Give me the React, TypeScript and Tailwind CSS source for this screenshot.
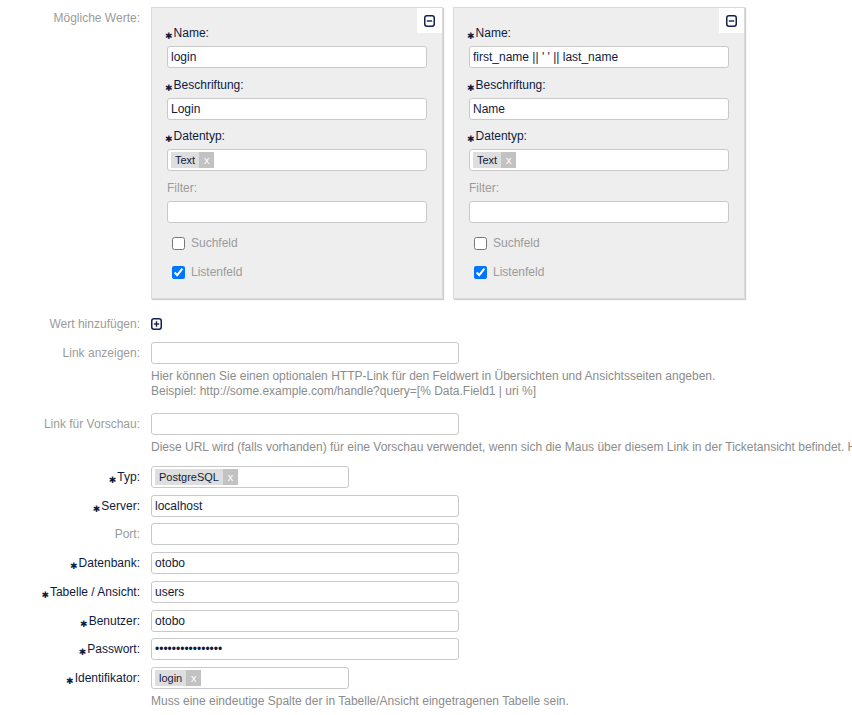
import React from "react";

const INK = "text-[#0f1b3d]";

function Star() {
  return (
    <span className="relative top-[2px] mr-[1px] inline-block align-baseline text-[9px] leading-[0] text-[#0f1b3d]" style={{ fontFamily: '"DejaVu Sans", sans-serif' }}>
      ✱
    </span>
  );
}

function BoxIcon({ plus }: { plus?: boolean }) {
  return (
    <svg width="11" height="12" viewBox="0 0 11 12" className="block">
      <rect x="0.75" y="0.75" width="9.5" height="10.5" rx="2.2" fill="none" stroke="#14204a" strokeWidth="1.5" />
      <line x1="2.8" y1="6" x2="8.2" y2="6" stroke="#14204a" strokeWidth="1.4" />
      {plus && <line x1="5.5" y1="3.2" x2="5.5" y2="8.8" stroke="#14204a" strokeWidth="1.4" />}
    </svg>
  );
}

function TextInput({ value = "", wide = true, type = "text" }: { value?: string; wide?: boolean; type?: string }) {
  return (
    <input
      readOnly
      type={type}
      value={value}
      className={`block h-[22px] ${wide ? "w-[308px]" : "w-[198px]"} rounded-[3px] border border-[#c9c9c9] bg-white px-[3px] text-[12px] ${INK} outline-none`}
    />
  );
}

function Tag({ label }: { label: string }) {
  return (
    <span className="flex h-[16px] items-stretch text-[11px] leading-[16px]">
      <span className={`bg-[#dedede] px-[4px] ${INK}`}>{label}</span>
      <span className="w-[15px] bg-[#c2c2c2] text-center text-white">x</span>
    </span>
  );
}

function TagInput({ label, wide }: { label: string; wide?: boolean }) {
  return (
    <div className={`flex h-[22px] ${wide ? "w-[260px]" : "w-[198px]"} items-center rounded-[3px] border border-[#c9c9c9] bg-white px-[3px]`}>
      <Tag label={label} />
    </div>
  );
}

function PanelField({ label, required, children, first }: { label: string; required?: boolean; children: React.ReactNode; first?: boolean }) {
  return (
    <div className={first ? "" : "mt-[8.7px]"}>
      <div className={`h-[16px] text-[12px] leading-[16px] ${required ? INK + " -ml-[2px]" : "text-[#9b9b9b]"}`}>
        {required && <Star />}
        {label}
      </div>
      <div className="mt-[5px]">{children}</div>
    </div>
  );
}

function PanelInput({ value = "" }: { value?: string }) {
  return (
    <input
      readOnly
      value={value}
      className={`block h-[22px] w-[260px] rounded-[3px] border border-[#c9c9c9] bg-white px-[3px] text-[12px] ${INK} outline-none`}
    />
  );
}

function ValuePanel({ name, caption }: { name: string; caption: string }) {
  return (
    <div className="relative w-[292px] border border-[#dadada] bg-[#eeeeee] px-[15px] pb-[18px] pt-[17px] shadow-[1px_1px_1px_#cfcfcf]">
      <div className="absolute right-0 top-0 flex h-[25px] w-[25px] items-center justify-center bg-white">
        <BoxIcon />
      </div>
      <PanelField label="Name:" required first>
        <PanelInput value={name} />
      </PanelField>
      <PanelField label="Beschriftung:" required>
        <PanelInput value={caption} />
      </PanelField>
      <PanelField label="Datentyp:" required>
        <TagInput label="Text" wide />
      </PanelField>
      <PanelField label="Filter:">
        <PanelInput />
      </PanelField>
      <label className="ml-[5px] mt-[12px] flex h-[16px] items-center text-[12px] text-[#9b9b9b]">
        <input type="checkbox" className="m-0 h-[13px] w-[13px]" />
        <span className="ml-[6px]">Suchfeld</span>
      </label>
      <label className="ml-[5px] mt-[13px] flex h-[16px] items-center text-[12px] text-[#9b9b9b]">
        <input type="checkbox" defaultChecked className="m-0 h-[13px] w-[13px]" />
        <span className="ml-[6px]">Listenfeld</span>
      </label>
    </div>
  );
}

function Label({ text, required }: { text: string; required?: boolean }) {
  return (
    <div className={`h-[22px] w-[141px] shrink-0 pr-[1px] text-right text-[12px] leading-[22px] ${required ? INK : "text-[#9b9b9b]"}`}>
      {required && <Star />}
      {text}
    </div>
  );
}

function Help({ children }: { children: React.ReactNode }) {
  return <div className="mt-[5px] whitespace-nowrap text-[12px] leading-[15px] text-[#8c8c8c]">{children}</div>;
}

function Row({ label, required, children, className = "" }: { label: string; required?: boolean; children: React.ReactNode; className?: string }) {
  return (
    <div className={`flex gap-[10px] ${className}`}>
      <Label text={label} required={required} />
      <div className="min-w-0">{children}</div>
    </div>
  );
}

export default function App() {
  return (
    <div className="h-[715px] w-[852px] overflow-hidden bg-white pt-[7px]" style={{ fontFamily: '"Liberation Sans", Arial, sans-serif' }}>
      <div className="flex gap-[10px]">
        <div className="w-[141px] shrink-0 pr-[1px] pt-[3px] text-right text-[12px] leading-[16px] text-[#9b9b9b]">Mögliche Werte:</div>
        <div className="flex gap-[10px]">
          <ValuePanel name="login" caption="Login" />
          <ValuePanel name="first_name || ' ' || last_name" caption="Name" />
        </div>
      </div>

      <div className="mt-[14px] flex items-center gap-[10px]">
        <Label text="Wert hinzufügen:" />
        <BoxIcon plus />
      </div>

      <Row label="Link anzeigen:" className="mt-[7px]">
        <TextInput />
        <Help>
          <div>Hier können Sie einen optionalen HTTP-Link für den Feldwert in Übersichten und Ansichtsseiten angeben.</div>
          <div>Beispiel: http://some.example.com/handle?query=[% Data.Field1 | uri %]</div>
        </Help>
      </Row>

      <Row label="Link für Vorschau:" className="mt-[14px]">
        <TextInput />
        <Help>
          Diese URL wird (falls vorhanden) für eine Vorschau verwendet, wenn sich die Maus über diesem Link in der Ticketansicht befindet. Hierfür muss ebenso das Feld „Link anzeigen" ausgefüllt sein.
        </Help>
      </Row>

      <div className="mt-[11px] flex flex-col gap-[6.7px]">
        <Row label="Typ:" required>
          <TagInput label="PostgreSQL" />
        </Row>
        <Row label="Server:" required>
          <TextInput value="localhost" />
        </Row>
        <Row label="Port:">
          <TextInput />
        </Row>
        <Row label="Datenbank:" required>
          <TextInput value="otobo" />
        </Row>
        <Row label="Tabelle / Ansicht:" required>
          <TextInput value="users" />
        </Row>
        <Row label="Benutzer:" required>
          <TextInput value="otobo" />
        </Row>
        <Row label="Passwort:" required>
          <TextInput type="password" value="otobootobootobo1" />
        </Row>
        <Row label="Identifikator:" required>
          <TagInput label="login" />
          <Help>Muss eine eindeutige Spalte der in Tabelle/Ansicht eingetragenen Tabelle sein.</Help>
        </Row>
      </div>
    </div>
  );
}
